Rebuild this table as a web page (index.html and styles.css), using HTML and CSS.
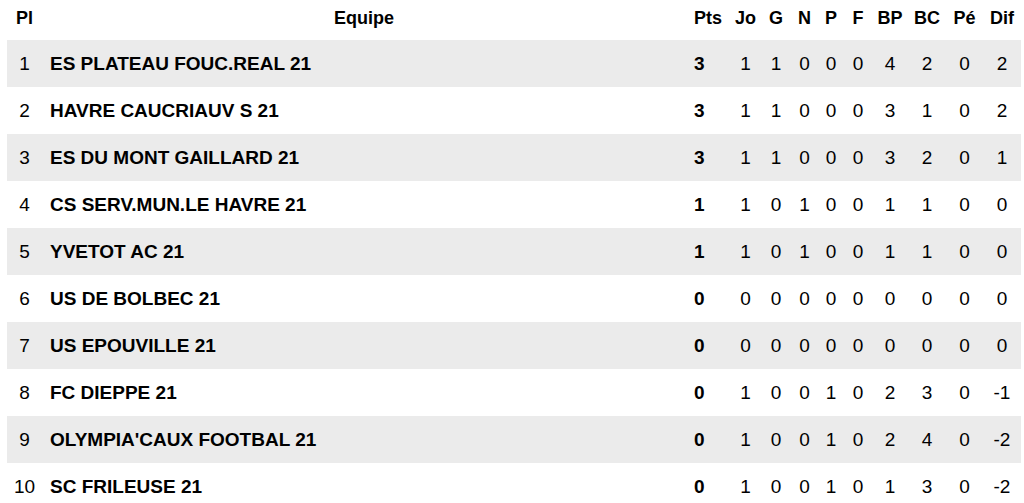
FILE: index.html
```html
<!DOCTYPE html>
<html lang="fr">
<head>
<meta charset="utf-8">
<title>Classement</title>
<link rel="stylesheet" href="styles.css">
</head>
<body>
<table class="ranking">
  <colgroup>
    <col class="c-pl"><col class="c-team"><col class="c-pts"><col class="c-jo"><col class="c-g"><col class="c-n"><col class="c-p"><col class="c-f"><col class="c-bp"><col class="c-bc"><col class="c-pe"><col class="c-dif">
  </colgroup>
  <thead>
    <tr><th>Pl</th><th>Equipe</th><th>Pts</th><th>Jo</th><th>G</th><th>N</th><th>P</th><th>F</th><th>BP</th><th>BC</th><th>Pé</th><th>Dif</th></tr>
  </thead>
  <tbody>
    <tr class="odd"><td>1</td><td class="team">ES PLATEAU FOUC.REAL 21</td><td class="pts">3</td><td>1</td><td>1</td><td>0</td><td>0</td><td>0</td><td>4</td><td>2</td><td>0</td><td>2</td></tr>
    <tr><td>2</td><td class="team">HAVRE CAUCRIAUV S 21</td><td class="pts">3</td><td>1</td><td>1</td><td>0</td><td>0</td><td>0</td><td>3</td><td>1</td><td>0</td><td>2</td></tr>
    <tr class="odd"><td>3</td><td class="team">ES DU MONT GAILLARD 21</td><td class="pts">3</td><td>1</td><td>1</td><td>0</td><td>0</td><td>0</td><td>3</td><td>2</td><td>0</td><td>1</td></tr>
    <tr><td>4</td><td class="team">CS SERV.MUN.LE HAVRE 21</td><td class="pts">1</td><td>1</td><td>0</td><td>1</td><td>0</td><td>0</td><td>1</td><td>1</td><td>0</td><td>0</td></tr>
    <tr class="odd"><td>5</td><td class="team">YVETOT AC 21</td><td class="pts">1</td><td>1</td><td>0</td><td>1</td><td>0</td><td>0</td><td>1</td><td>1</td><td>0</td><td>0</td></tr>
    <tr><td>6</td><td class="team">US DE BOLBEC 21</td><td class="pts">0</td><td>0</td><td>0</td><td>0</td><td>0</td><td>0</td><td>0</td><td>0</td><td>0</td><td>0</td></tr>
    <tr class="odd"><td>7</td><td class="team">US EPOUVILLE 21</td><td class="pts">0</td><td>0</td><td>0</td><td>0</td><td>0</td><td>0</td><td>0</td><td>0</td><td>0</td><td>0</td></tr>
    <tr><td>8</td><td class="team">FC DIEPPE 21</td><td class="pts">0</td><td>1</td><td>0</td><td>0</td><td>1</td><td>0</td><td>2</td><td>3</td><td>0</td><td>-1</td></tr>
    <tr class="odd"><td>9</td><td class="team">OLYMPIA'CAUX FOOTBAL 21</td><td class="pts">0</td><td>1</td><td>0</td><td>0</td><td>1</td><td>0</td><td>2</td><td>4</td><td>0</td><td>-2</td></tr>
    <tr><td>10</td><td class="team">SC FRILEUSE 21</td><td class="pts">0</td><td>1</td><td>0</td><td>0</td><td>1</td><td>0</td><td>1</td><td>3</td><td>0</td><td>-2</td></tr>
  </tbody>
</table>
</body>
</html>
```
FILE: styles.css
```css
html, body {
  margin: 0;
  padding: 0;
  background: #ffffff;
}
body {
  padding: 0 3px 0 7px;
  font-family: "Liberation Sans", Arial, Helvetica, sans-serif;
  color: #000;
}
.ranking {
  width: 1014px;
  table-layout: fixed;
  border-collapse: collapse;
  border-spacing: 0;
}
.c-pl { width: 35px; }
.c-team { width: 644px; }
.c-pts { width: 44px; }
.c-jo { width: 31px; }
.c-g { width: 30px; }
.c-n { width: 27px; }
.c-p { width: 26px; }
.c-f { width: 28px; }
.c-bp { width: 36px; }
.c-bc { width: 38px; }
.c-pe { width: 37px; }
.c-dif { width: 38px; }

.ranking th {
  height: 36px;
  padding: 0 0 4px 0;
  font-size: 18px;
  font-weight: bold;
  text-align: center;
  vertical-align: middle;
  white-space: nowrap;
}
.ranking td {
  height: 47px;
  padding: 0;
  font-size: 19px;
  text-align: center;
  vertical-align: middle;
  white-space: nowrap;
}
.ranking tr.odd td {
  background: #ebebeb;
}
.ranking td.team {
  text-align: left;
  padding-left: 8px;
  font-weight: bold;
}
.ranking td.pts {
  text-align: left;
  padding-left: 8px;
  font-weight: bold;
}
```
